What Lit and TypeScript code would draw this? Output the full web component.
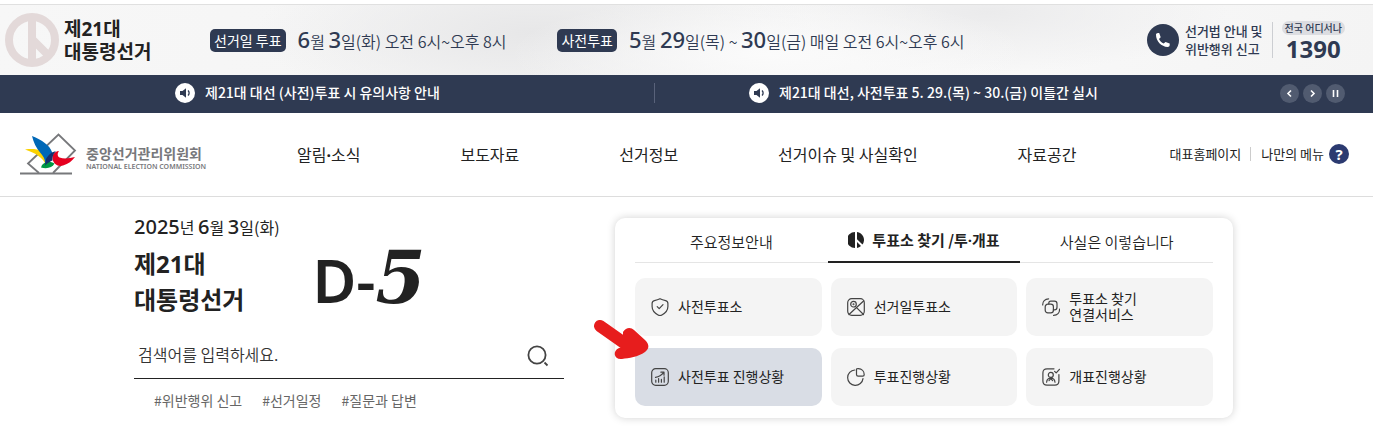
import { LitElement, html, css, svg } from "lit";
import { customElement, state } from "lit/decorators.js";
import { classMap } from "lit/directives/class-map.js";

const tiles = [
  { icon: "shield", lines: ["사전투표소"] },
  { icon: "map", lines: ["선거일투표소"] },
  { icon: "link", lines: ["투표소 찾기", "연결서비스"] },
  { icon: "chart", lines: ["사전투표 진행상황"], selected: true },
  { icon: "pie", lines: ["투표진행상황"] },
  { icon: "person", lines: ["개표진행상황"] },
];

const icons: Record<string, unknown> = {
  shield: svg`<path d="M9 .7C7 1.700 5.200 2.200 3.400 2.600 1.800 3 1.100 4 1.100 5.600v2.800c0 3.800 2.700 6.700 6 8.600 1.300.8 2.500.8 3.800 0 3.300-1.900 6-4.800 6-8.600V5.600c0-1.600-.7-2.600-2.300-3C12.800 2.200 11 1.700 9 .7z"/><path d="M6.200 8.700l2 2 3.800-4"/>`,
  map: svg`<rect x=".7" y=".7" width="16.600" height="16.600" rx="4"/><circle cx="6.500" cy="6.200" r="2.800"/><circle cx="6.500" cy="6.200" r=".4"/><path d="M16.800 2.800L2 16.500M9.800 9.800l6.700 6.700"/>`,
  link: svg`<rect x="3.200" y="6.200" width="8.200" height="8.600" rx="2.600"/><path d="M6.800 6V5.200c0-1.200.8-2 2-2h3.600c1.700 0 2.600 1 2.600 2.600v3.400c0 1.600-.9 2.600-2.600 2.600h-1M.7 7C.6 3.600 3 1 6.600.8M17.600 11c.1 3.600-2.300 6.200-6 6.400"/>`,
  chart: svg`<rect x=".7" y=".7" width="16.600" height="16.600" rx="4"/><path d="M4.800 14.200v-2M7.600 14.200v-3.600M10.400 14.200v-2.800M13.200 14.200V8.800M4.500 9.300c3.500-.6 6-2.200 8.300-5M9.900 4.200h3.100v3"/>`,
  pie: svg`<path d="M7.800 2A7.700 7.700 0 1 0 16 10.600"/><path d="M9.500.9v5.600c0 1.100.5 1.600 1.600 1.600h4.700c.9 0 1.400-.5 1.400-1.400C17.200 3.300 14.700.8 11.400.7c-1 0-1.900 0-1.900.2z"/>`,
  person: svg`<path d="M12 .8H5C2.300.8.9 2.200.9 4.900v8.200c0 2.700 1.400 4.100 4.100 4.100h7.800c2.700 0 4.100-1.400 4.100-4.100V6.500"/><path d="M12.600 3.300l1.600 1.600 3.200-3.600"/><circle cx="8.800" cy="6.900" r="2.500"/><path d="M4.600 14.200c.3-2.600 1.800-4 4.200-4s3.900 1.400 4.200 4M7 12.600l1.800-2 1.800 2"/>`,
};

const speaker = html`<svg class="speaker" viewBox="0 0 20 20" aria-hidden="true">
  <circle cx="10" cy="10" r="10" fill="#fff" />
  <path d="M5 8h2.500L11 5.200v9.600L7.500 12H5z" fill="#2f3a52" />
  <path d="M13 7.500c1.500 1.300 1.500 3.700 0 5" fill="none" stroke="#2f3a52" stroke-width="1.300" />
</svg>`;

const dot = html`<span class="dot">·</span>`;

@customElement("app-root")
export class AppRoot extends LitElement {
  @state() private tab = 1;

  static styles = css`
    :host {
      display: block;
      background: #fff;
      color: #222;
      font-family: "Noto Sans CJK KR", "Noto Sans", sans-serif;
      font-size: 14px;
      line-height: 20px;
      white-space: nowrap;
    }
    * { box-sizing: border-box; }
    a { color: inherit; text-decoration: none; }
    button { font: inherit; color: inherit; border: 0; padding: 0; background: none; cursor: pointer; }
    h1, h2, p, ul { margin: 0; padding: 0; list-style: none; font-weight: inherit; }
    svg { display: block; flex: none; }
    .latin { font-family: "Noto Sans", "Noto Sans CJK KR", sans-serif; }
    .dot { font-family: "Noto Sans", sans-serif; font-weight: 700; }

    .banner {
      display: flex;
      align-items: center;
      height: 71px;
      margin-top: 4px;
      padding: 0 28px 0 5px;
      border-top: 1px solid #e0e0e0;
      color: #2f3a52;
      background:
        radial-gradient(ellipse 260px 60px at 56% 70%, #fbfbfb, transparent),
        radial-gradient(ellipse 280px 80px at 39% 40%, #e7e7e8, transparent),
        radial-gradient(ellipse 240px 60px at 72% 10%, #ebebec, transparent),
        linear-gradient(100deg, #f7f7f7, #f4f4f4 50%, #f8f8f8 75%, #f4f4f4);
    }
    .emblem { width: 54px; height: 54px; }
    .brand { width: 151px; padding-left: 5px; color: #222; font-size: 19px; line-height: 21px; font-weight: 700; }
    .brand span { display: block; }
    .times { display: flex; gap: 51px; }
    .time { display: flex; align-items: center; gap: 12px; font-size: 16px; font-weight: 350; }
    .time b { font: 500 22px/20px "Noto Sans", sans-serif; }
    .badge { padding: 2px 4px; border-radius: 5px; color: #fff; background: #2f3a52; font-size: 14px; line-height: 19px; font-weight: 400; }
    .contact { display: flex; align-items: center; margin-left: auto; font-weight: 500; }
    .phone { width: 32px; height: 32px; margin-right: 6px; }
    .law { padding-right: 9px; border-right: 1px solid #ccced2; font-size: 13px; line-height: 18px; }
    .call { display: flex; flex-direction: column; align-items: center; margin-left: 9px; padding-top: 4px; }
    .call span { padding: 0 3px; border-radius: 7px; background: #dcdde1; font-size: 10px; line-height: 14px; }
    .call strong { font: 700 24px/28px "Noto Sans", sans-serif; }

    .notice { display: flex; align-items: center; height: 38px; padding: 0 28px 2px 80px; color: #fff; background: #2f3a52; }
    .notices { display: grid; grid-template-columns: 1fr 1fr; flex: 1; }
    .notices li { padding-left: 95px; }
    .notices li + li { padding-left: 94px; border-left: 1px solid #59627a; }
    .notices a { display: flex; align-items: center; gap: 10px; font-weight: 500; }
    .notices a span { padding-bottom: 2px; line-height: 18px; }
    .speaker { width: 20px; height: 20px; }
    .controls { display: flex; gap: 4px; margin-left: 52px; }
    .controls button { border-radius: 50%; background: #515b70; }
    .controls svg { width: 19px; height: 19px; fill: none; stroke: #fff; stroke-width: 1.600; }

    .header { display: flex; align-items: center; height: 84px; padding: 0 24px 1px 19px; border-bottom: 1px solid #ddd; }
    .logo { display: flex; align-items: center; gap: 9px; color: #77787b; }
    .logo svg { width: 58px; height: 42px; }
    .logo > span { padding-top: 8px; }
    .logo strong { display: block; font-size: 14px; line-height: 18px; font-weight: 700; }
    .logo small { display: block; font: 600 7px/10px "Noto Sans", sans-serif; }
    .menu { display: flex; justify-content: space-between; flex: 1; margin: 0 93px 0 91px; font-size: 16px; }
    .util { display: flex; align-items: center; font-size: 13px; }
    .util a + a { margin-left: 9px; padding-left: 10px; border-left: 1px solid #ccc; line-height: 14px; }
    .help { width: 20px; height: 20px; margin-left: 5px; border-radius: 50%; color: #fff; background: #2b3a70; font: 700 15px/20px "Noto Sans", sans-serif; }

    .main { display: grid; grid-template-columns: 430fr 618fr; gap: 51px; padding: 21px 140px 22px 134px; }
    .date { font-size: 16px; line-height: 18px; }
    .date b { font: 500 20px/18px "Noto Sans", sans-serif; }
    .headline { display: flex; gap: 68px; }
    h1.title { margin-top: 10px; font-size: 24px; line-height: 35px; font-weight: 700; }
    h1.title span { display: block; }
    .dday { display: flex; align-items: baseline; padding-top: 2px; font: 600 60px/80px "Noto Sans", sans-serif; }
    .dday em { font: italic 700 72px/80px "DejaVu Serif", serif; }
    .search { display: flex; align-items: center; height: 49px; padding: 0 14px 0 4px; margin-top: 10px; border-bottom: 1px solid #222; }
    .search input { flex: 1; min-width: 0; border: 0; padding: 0; outline: 0; background: none; font: 350 16px/24px "Noto Sans CJK KR", sans-serif; }
    .search input::placeholder { color: #333; opacity: 1; }
    .search button { padding-top: 4px; }
    .search svg { width: 24px; height: 24px; fill: none; stroke: #444; stroke-width: 1.800; }
    .tags { display: flex; gap: 20px; margin-top: 11px; padding-left: 20px; color: #666; }

    .card { position: relative; padding: 0 20px 12px; border-radius: 10px; background: #fff; box-shadow: 0 0 8px rgba(0, 0, 0, 0.18); }
    .tabs { display: grid; grid-template-columns: repeat(3, 1fr); height: 45px; }
    .tab { display: flex; align-items: center; justify-content: center; gap: 8px; padding-top: 4px; border-bottom: 1px solid #e5e5e5; font-size: 15px; font-weight: 350; }
    .tab.on { padding-top: 0; border-bottom: 2px solid #222; font-weight: 700; }
    .tab svg { width: 16px; height: 16px; }
    .tiles { display: grid; grid-template-columns: repeat(3, 1fr); gap: 12px 9px; padding-top: 15px; }
    .tile { display: flex; align-items: center; gap: 9px; height: 58px; padding-left: 16px; border-radius: 10px; background: #f4f4f4; font-size: 14px; line-height: 16px; }
    .tile.selected { background: #d9dde5; }
    .tile svg { width: 18px; height: 18px; fill: none; stroke: #444; stroke-width: 1.200; stroke-linecap: round; stroke-linejoin: round; }
    .tile span { display: block; }
    .tile > span { padding-bottom: 2px; }
    .arrow { position: absolute; left: -23px; top: 100px; width: 60px; height: 44px; pointer-events: none; }
  `;

  render() {
    return html`
      <section class="banner">
        <svg class="emblem" viewBox="0 0 54 54" fill="none" stroke="#e3d9d9" aria-hidden="true">
          <circle cx="27" cy="27" r="23" stroke-width="8" />
          <path d="M27 4v46M28 27l15 15" stroke-width="8" />
        </svg>
        <h2 class="brand"><span class="latin">제21대</span><span>대통령선거</span></h2>
        <div class="times">
          <p class="time"><span class="badge">선거일 투표</span><span><b>6</b>월 <b>3</b>일(화) 오전 6시~오후 8시</span></p>
          <p class="time"><span class="badge">사전투표</span><span><b>5</b>월 <b>29</b>일(목) ~ <b>30</b>일(금) 매일 오전 6시~오후 6시</span></p>
        </div>
        <div class="contact">
          <svg class="phone" viewBox="0 0 32 32" aria-hidden="true">
            <circle cx="16" cy="16" r="16" fill="#2f3a52" />
            <path d="M9 10.500c.2-1 1-1.400 1.900-1.500h1.300l1.500 4.200-1.700 1.700c1 2.200 2.500 3.700 4.700 4.700l1.800-1.700 4.200 1.500v1.700c0 1.200-.8 1.900-2 1.900C14.300 22.700 8.900 17.200 9 10.500z" fill="#fff" />
          </svg>
          <p class="law">선거법 안내 및<br />위반행위 신고</p>
          <p class="call"><span>전국 어디서나</span><strong>1390</strong></p>
        </div>
      </section>

      <section class="notice">
        <ul class="notices">
          <li><a href="#">${speaker}<span>제21대 대선 (사전)투표 시 유의사항 안내</span></a></li>
          <li><a href="#">${speaker}<span>제21대 대선, 사전투표 5. 29.(목) ~ 30.(금) 이틀간 실시</span></a></li>
        </ul>
        <div class="controls">
          <button aria-label="이전"><svg viewBox="0 0 19 19"><path d="M11 6.500l-3 3 3 3" /></svg></button>
          <button aria-label="다음"><svg viewBox="0 0 19 19"><path d="M8 6.500l3 3-3 3" /></svg></button>
          <button aria-label="정지"><svg viewBox="0 0 19 19"><path d="M7.500 6v7M11.500 6v7" /></svg></button>
        </div>
      </section>

      <header class="header">
        <a class="logo" href="#">
          <svg viewBox="0 0 58 42" aria-hidden="true">
            <path d="M1 40.500h52" stroke="#77787b" stroke-width="2" />
            <path d="M20 40L9 30.500 39.500 1.500 56 17.500 34 40" fill="none" stroke="#77787b" stroke-width="1.800" />
            <path d="M6 16.500c10-1.500 19 .5 23 5.500 2.500 4 1 8-2 10C24 25 17 20 6 16.500z" fill="#fbd200" />
            <path d="M13 3c10 4 17.500 9 20 16 1.500 5-1 10-7 14 .500-6-1-9-4.500-13C17 15 14.500 9 13 3z" fill="#0068b7" />
            <path d="M23 32c4-4 8-4 12.500-1.500-2 4.500-8 5.500-13.500 4z" fill="#009944" />
            <path d="M56 24c-6 1.500-11 2-15.500.500-2-1-2.500-4-.5-6.500-5 .5-7 4-6.500 8 1 5 5.500 8 10.500 6.500 5.500-1.500 9-4.500 12-8.500z" fill="#e60020" />
            <path d="M27 26c3-5 6-7.500 10-7.500-3 2-4 6-3.500 9-2.500 1-5 2.500-7.500 5z" fill="#17306e" />
          </svg>
          <span><strong>중앙선거관리위원회</strong><small>NATIONAL ELECTION COMMISSION</small></span>
        </a>
        <nav class="menu">
          <a href="#">알림${dot}소식</a>
          ${["보도자료", "선거정보", "선거이슈 및 사실확인", "자료공간"].map((t) => html`<a href="#">${t}</a>`)}
        </nav>
        <div class="util">
          <a href="#">대표홈페이지</a><a href="#">나만의 메뉴</a><button class="help" aria-label="도움말">?</button>
        </div>
      </header>

      <main class="main">
        <section>
          <p class="date"><b>2025</b>년 <b>6</b>월 <b>3</b>일(화)</p>
          <div class="headline">
            <h1 class="title"><span class="latin">제21대</span><span>대통령선거</span></h1>
            <div class="dday">D-<em>5</em></div>
          </div>
          <form class="search" @submit=${(e: Event) => e.preventDefault()}>
            <input type="text" aria-label="검색어" placeholder="검색어를 입력하세요." />
            <button aria-label="검색"><svg viewBox="0 0 24 24"><circle cx="11" cy="11" r="8.600" /><path d="M18.500 18.500l3 3" /></svg></button>
          </form>
          <div class="tags">
            <a href="#">#위반행위 신고</a><a href="#">#선거일정</a><a href="#">#질문과 답변</a>
          </div>
        </section>

        <section class="card">
          <div class="tabs" role="tablist">
            ${[html`주요정보안내`, html`투표소 찾기 /투${dot}개표`, html`사실은 이렇습니다`].map(
              (t, i) => html`<button
                role="tab"
                aria-selected=${this.tab === i}
                class=${classMap({ tab: true, on: this.tab === i })}
                @click=${() => (this.tab = i)}
              >
                ${this.tab === i
                  ? html`<svg viewBox="0 0 16 16" aria-hidden="true"><path d="M7 0v16A8 8 0 0 1 7 0zM9 0a8 8 0 0 1 5.500 12.600L9 7.200zM9 10l4 4a8 8 0 0 1-4 2z" fill="#222" /></svg>`
                  : ""}<span>${t}</span>
              </button>`
            )}
          </div>
          <div class="tiles">
            ${tiles.map(
              (t) => html`<a href="#" class=${classMap({ tile: true, selected: !!t.selected })}>
                <svg viewBox="0 0 18 18" aria-hidden="true">${icons[t.icon]}</svg>
                <span>${t.lines.map((l) => html`<span>${l}</span>`)}</span>
              </a>`
            )}
          </div>
          <svg class="arrow" viewBox="0 0 60 44" aria-hidden="true">
            <path d="M8 8l27 19" stroke="#e71d1d" stroke-width="12" stroke-linecap="round" />
            <path d="M31 14c3-5 8-5 11-2l11 10c5 5 4 9 0 12-7 5-16 6-23 7-8 1-10-8-3-11l4-1z" fill="#e71d1d" />
          </svg>
        </section>
      </main>
    `;
  }
}
